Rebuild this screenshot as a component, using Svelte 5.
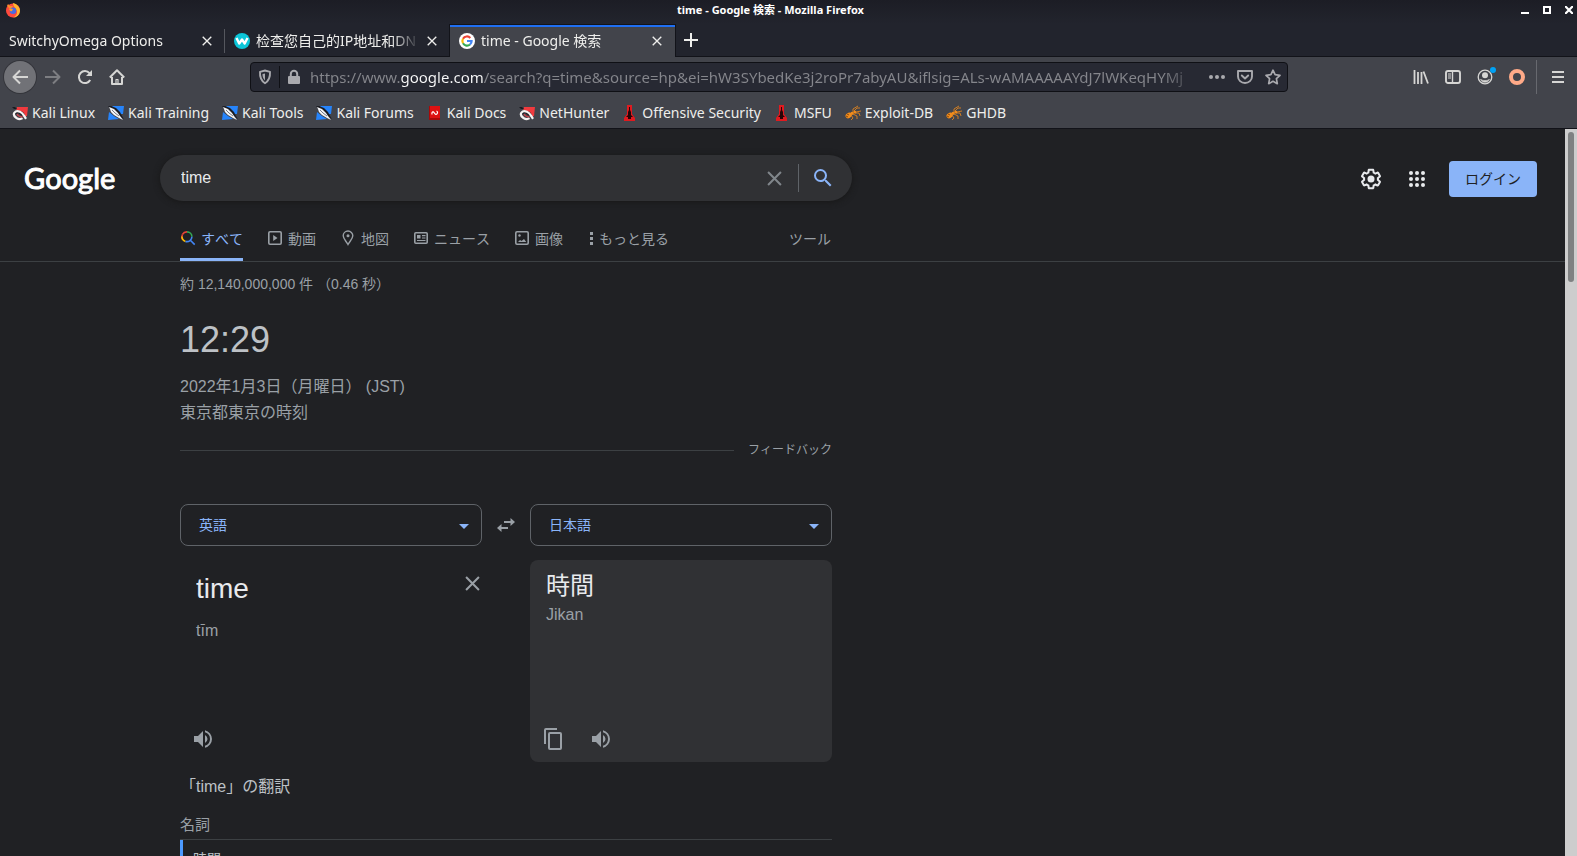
<script>
  let query = 'time';
  let sourceText = 'time';
  let url = 'https://www.google.com/search?q=time&source=hp&ei=hW3SYbedKe3j2roPr7abyAU&iflsig=ALs-wAMAAAAAYdJ7lWKeqHYMj';
  let sourceLang = '英語';
  let targetLang = '日本語';
  let activeTab = 2;

  const tabs = [
    { title: 'SwitchyOmega Options', icon: '' },
    { title: '检查您自己的IP地址和DN', icon: 'w' },
    { title: 'time - Google 検索', icon: 'g' },
  ];

  const bookmarks = [
    { title: 'Kali Linux', icon: 'kali' },
    { title: 'Kali Training', icon: 'blue' },
    { title: 'Kali Tools', icon: 'blue' },
    { title: 'Kali Forums', icon: 'blue' },
    { title: 'Kali Docs', icon: 'docs' },
    { title: 'NetHunter', icon: 'kali' },
    { title: 'Offensive Security', icon: 'offsec' },
    { title: 'MSFU', icon: 'offsec' },
    { title: 'Exploit-DB', icon: 'ant' },
    { title: 'GHDB', icon: 'ant' },
  ];

  const filters = [
    { title: 'すべて', icon: 'all' },
    { title: '動画', icon: 'video' },
    { title: '地図', icon: 'map' },
    { title: 'ニュース', icon: 'news' },
    { title: '画像', icon: 'image' },
  ];
</script>

{#snippet cross(size)}
  <svg width={size} height={size} viewBox="0 0 14 14" fill="none" stroke="currentColor" stroke-width="1.9">
    <path d="M1 1l12 12M13 1L1 13" />
  </svg>
{/snippet}

{#snippet volume()}
  <svg width="24" height="24" viewBox="0 0 24 24" fill="currentColor">
    <path d="M3 9v6h4l5 5V4L7 9H3zm13.5 3A4.5 4.5 0 0 0 14 7.97v8.05A4.5 4.5 0 0 0 16.5 12zM14 3.23v2.06a7 7 0 0 1 0 13.42v2.06a9 9 0 0 0 0-17.54z" />
  </svg>
{/snippet}

{#snippet bookmarkIcon(kind)}
  <svg width="16" height="16" viewBox="0 0 16 16">
    {#if kind === 'kali'}
      <path d="M5 2h11l-1 9-3 1-8-6z" fill="#f03a3e" />
      <path d="M0 2h3l2 2H2zM2 6l3-1 6 2 2 3-3 1-4-3-4 2z" fill="#1a1b20" />
      <path d="M10.500 13.200c-1.500 1-4 1-6-.2C2.300 11.500 1.300 9.500 2.300 7.800 3.500 6 6 6 8 6.800c2.500 1 3.500 3 4.500 4.600l1.500 2.400" fill="none" stroke="#f6f4f4" stroke-width="2.200" />
      <path d="M5 9c1 2 2.500 3 5.500 2.800" fill="none" stroke="#c9434a" stroke-width="1.200" />
    {:else if kind === 'blue'}
      <path d="M4 1h12l-1 8-4 0-5-5zM1 7l5 4 5 3-11 1z" fill="#2684fb" />
      <path d="M0 1h3l5 2 4 4 2 4 2 3-3-2-4-3-5-4z" fill="#1b1c22" />
      <path d="M1 2l5 2 4 4 2 3 3 4-4-2-5-3-3-3-1-3z" fill="#f2f4f7" />
      <path d="M4 5l3 3 4 3" fill="none" stroke="#777c86" stroke-width="1" />
    {:else if kind === 'docs'}
      <path d="M2 1h11v14H2z" fill="#dd1111" />
      <path d="M2 1h1v14H2zM2 13h11v2H2z" fill="#a90808" />
      <path d="M5 9.500C4.500 7 6 6 7 7.500s2 2.500 3 1.300.5-2.300-.5-2.800" fill="none" stroke="#fff" stroke-width="1.200" />
    {:else if kind === 'offsec'}
      <path d="M5 0h5v9l3 4v3H2v-3l3-4z" fill="#e01a1f" />
      <path d="M7 2h1v3l1 2v3l2 2H9v2H6v-2H4l2-2V7l1-2z" fill="#260608" />
    {:else}
      <g fill="#f28c1b" stroke="#f28c1b">
        <ellipse cx="3.600" cy="10.500" rx="3.200" ry="2.600" transform="rotate(-30 3.600 10.500)" stroke="none" />
        <circle cx="7" cy="8.300" r="1.600" stroke="none" />
        <circle cx="9.800" cy="7.200" r="1.400" stroke="none" />
        <path d="M8 7V4l5-3M9 6l3-3 3 0M11 7l5-1M10 8l4 0 1 3M8 9l4 2v3M6 10l2 3-2 2" fill="none" stroke-width=".8" />
      </g>
      <path d="M2 9l2 1m-3 1l2 1" stroke="#8b4a0b" stroke-width="1" />
    {/if}
  </svg>
{/snippet}

<div class="window">
  <!-- Window title bar -->
  <div class="titlebar">
    <svg class="fox" width="16" height="16" viewBox="0 0 16 16">
      <circle cx="8" cy="8.500" r="7" fill="#ff4a3d" />
      <path d="M8 1c4 1 7 4 7 8a7 7 0 0 1-7 6.500c3-1 4.500-3.500 4-6C11.500 6 8 5 8 1z" fill="#ffb52e" />
      <path d="M2 4l1-2 2 2h3L6 8z" fill="#ff8b2b" />
      <circle cx="8" cy="8.800" r="3.300" fill="#4a6be0" />
      <path d="M4 7c2-1 3 0 4 0l-1 2c-1 .5-2 .5-3-2z" fill="#ff9b2b" />
    </svg>
    <div class="window-title">time - Google 検索 - Mozilla Firefox</div>
    <div class="window-buttons">
      <button aria-label="Minimize"><svg width="8" height="8"><path d="M0 6h8v2H0z" fill="#fff" /></svg></button>
      <button aria-label="Maximize"><svg width="8" height="8"><path d="M1 1h6v6H1z" fill="none" stroke="#fff" stroke-width="2" /></svg></button>
      <button aria-label="Close"><svg width="8" height="8"><path d="M0 0l8 8M8 0L0 8" stroke="#fff" stroke-width="2.200" /></svg></button>
    </div>
  </div>

  <!-- Tab strip -->
  <div class="tabstrip">
    {#each tabs as tab, i}
      <div class="tab" class:active={i === activeTab}>
        <button class="tab-select" on:click={() => (activeTab = i)}>
          {#if tab.icon === 'w'}
            <svg width="16" height="16" viewBox="0 0 16 16">
              <circle cx="8" cy="8" r="8" fill="#0bc5d8" />
              <path d="M2.500 5l2.700 5.500L8 6.500l2.700 4L13.500 5" fill="none" stroke="#fff" stroke-width="2.400" stroke-linejoin="round" />
            </svg>
          {:else if tab.icon === 'g'}
            <svg width="16" height="16" viewBox="0 0 16 16">
              <circle cx="8" cy="8" r="8" fill="#fff" />
              <g fill="none" stroke-width="2.200">
                <path d="M11.300 4.900A4.600 4.600 0 0 0 4 5.700" stroke="#ea4335" />
                <path d="M4 5.700a4.600 4.600 0 0 0 0 4.600" stroke="#fbbc05" />
                <path d="M4 10.300a4.600 4.600 0 0 0 7 1.200" stroke="#34a853" />
                <path d="M11 11.500A4.600 4.600 0 0 0 12.600 8H8" stroke="#4285f4" />
              </g>
            </svg>
          {/if}
          <span class="tab-title">{tab.title}</span>
        </button>
        <button class="tab-close" aria-label="Close tab">{@render cross(10)}</button>
      </div>
    {/each}
    <button class="new-tab" aria-label="New tab">
      <svg width="14" height="14"><path d="M7 0v14M0 7h14" stroke="currentColor" stroke-width="2" /></svg>
    </button>
  </div>

  <!-- Navigation toolbar -->
  <div class="toolbar">
    <button class="tool back" aria-label="Back">
      <svg width="16" height="16" viewBox="0 0 16 16" fill="none" stroke="currentColor" stroke-width="2"><path d="M16 8H1.500M8 1.500L1.500 8 8 14.500" stroke-linejoin="round" /></svg>
    </button>
    <button class="tool dim" aria-label="Forward">
      <svg width="16" height="16" viewBox="0 0 16 16" fill="none" stroke="currentColor" stroke-width="2"><path d="M0 8h14.500M8 1.500L14.500 8 8 14.500" stroke-linejoin="round" /></svg>
    </button>
    <button class="tool" aria-label="Reload">
      <svg width="16" height="16" viewBox="0 0 16 16" fill="none" stroke="currentColor" stroke-width="2"><path d="M13.200 11A6 6 0 1 1 12.500 4.200" /><path d="M15 1v6H9z" fill="currentColor" stroke="none" /></svg>
    </button>
    <button class="tool" aria-label="Home">
      <svg width="16" height="16" viewBox="0 0 16 16" fill="none" stroke="currentColor" stroke-width="2" stroke-linejoin="round"><path d="M.8 8.500L8 1.300l7.200 7.200M3 8v7h10V8" /><path d="M7 10.500h2V15H7z" stroke-width="1.200" /></svg>
    </button>

    <div class="urlbar">
      <button class="url-icon" aria-label="Tracking protection">
        <svg width="16" height="16" viewBox="0 0 16 16"><path d="M8 1.500l5 1.300c.3 5.200-1 9-5 11.400C4 11.800 2.700 8 3 2.800z" fill="none" stroke="currentColor" stroke-width="1.900" stroke-linejoin="round" /><path d="M8 4.500v7C6 9.500 5.400 7.500 5.500 5z" fill="currentColor" /></svg>
      </button>
      <span class="url-divider"></span>
      <button class="url-icon" aria-label="Site information">
        <svg width="16" height="16" viewBox="0 0 16 16"><path d="M4.800 8V5a3.200 3.200 0 0 1 6.400 0v3" fill="none" stroke="currentColor" stroke-width="2" /><rect x="2" y="7" width="12" height="8" rx="1" fill="currentColor" /></svg>
      </button>
      <input type="text" class="url-input" aria-label="Address" bind:value={url} />
      <button class="url-icon" aria-label="Page actions">
        <svg width="16" height="16" viewBox="0 0 16 16" fill="currentColor"><circle cx="2" cy="8" r="2" /><circle cx="8" cy="8" r="2" /><circle cx="14" cy="8" r="2" /></svg>
      </button>
      <button class="url-icon" aria-label="Save to Pocket">
        <svg width="16" height="16" viewBox="0 0 16 16" fill="none" stroke="currentColor" stroke-width="1.900" stroke-linecap="round" stroke-linejoin="round"><path d="M1 2h14v5.500a7 6.500 0 0 1-14 0z" /><path d="M4.800 6.500L8 9.500l3.200-3" /></svg>
      </button>
      <button class="url-icon" aria-label="Bookmark this page">
        <svg width="16" height="16" viewBox="0 0 16 16" fill="none" stroke="currentColor" stroke-width="1.700" stroke-linejoin="round"><path d="M8 1.200l2.100 4.500 4.900.6-3.600 3.400.9 5L8 12.300l-4.300 2.400.9-5L1 6.300l4.900-.6z" /></svg>
      </button>
    </div>

    <button class="tool" aria-label="Library">
      <svg width="16" height="16" viewBox="0 0 16 16" stroke="currentColor" stroke-width="1.800"><path d="M1.500 1v14M5 3v12M8.500 3v12M10.500 2.500L15 14.500" /></svg>
    </button>
    <button class="tool" aria-label="Sidebars">
      <svg width="16" height="16" viewBox="0 0 16 16" fill="none" stroke="currentColor"><rect x="1" y="2" width="14" height="12" rx="2" stroke-width="1.900" /><path d="M7.500 2v12" stroke-width="1.400" /><path d="M3 5h3M3 7h3M3 9h3" stroke-width="1" /></svg>
    </button>
    <button class="tool" aria-label="Account">
      <svg width="16" height="16" viewBox="0 0 16 16"><circle cx="8" cy="8" r="6.800" fill="none" stroke="currentColor" stroke-width="1.300" /><circle cx="8" cy="6.200" r="3" fill="currentColor" /><path d="M3.500 10c1 2 8 2 9 0-.5 2-2.500 3.300-4.500 3.300S4 12 3.500 10z" fill="currentColor" stroke="currentColor" stroke-width=".6" /></svg>
      <span class="badge"></span>
    </button>
    <button class="tool" aria-label="SwitchyOmega">
      <svg width="16" height="16" viewBox="0 0 16 16"><circle cx="8" cy="8" r="6" fill="none" stroke="#fa8" stroke-width="4" /></svg>
    </button>
    <span class="tool-divider"></span>
    <button class="tool" aria-label="Open menu">
      <svg width="12" height="12"><path d="M0 1h12M0 6h12M0 11h12" stroke="currentColor" stroke-width="2" /></svg>
    </button>
  </div>

  <!-- Bookmarks bar -->
  <nav class="bookmarks" aria-label="Bookmarks">
    {#each bookmarks as bookmark}
      <a href="#{bookmark.title}">{@render bookmarkIcon(bookmark.icon)}{bookmark.title}</a>
    {/each}
  </nav>

  <div class="viewport">
    <div class="page">
      <header class="search-header">
        <a class="logo" href="#home">Google</a>
        <form class="searchbox" on:submit|preventDefault>
          <input type="text" aria-label="検索" bind:value={query} />
          <button type="button" class="clear" aria-label="クリア" on:click={() => (query = '')}>{@render cross(15)}</button>
          <span class="search-divider"></span>
          <button class="search-button" aria-label="検索">
            <svg width="24" height="24" viewBox="0 0 24 24" fill="#8ab4f8"><path d="M15.500 14h-.79l-.28-.27A6.470 6.470 0 0 0 16 9.500 6.500 6.500 0 1 0 9.500 16c1.610 0 3.090-.59 4.230-1.570l.27.28v.79l5 4.990L20.490 19l-4.990-5zm-6 0a4.500 4.500 0 1 1 0-9 4.500 4.500 0 0 1 0 9z" /></svg>
          </button>
        </form>
        <div class="account">
          <button class="round" aria-label="設定">
            <svg width="24" height="24" viewBox="0 0 24 24"><path d="M13.850 22.250h-3.700c-.74 0-1.360-.54-1.450-1.270l-.27-1.890c-.27-.14-.53-.29-.79-.46l-1.800.72c-.7.26-1.470-.03-1.810-.65L2.200 15.530c-.35-.66-.2-1.440.36-1.880l1.530-1.190a7 7 0 0 1 0-.92L2.570 10.350c-.58-.46-.74-1.260-.37-1.880l1.840-3.190c.34-.62 1.110-.9 1.790-.63l1.810.73c.26-.17.520-.32.780-.46l.27-1.910c.09-.7.710-1.250 1.440-1.250h3.700c.74 0 1.360.54 1.450 1.270l.27 1.890c.27.14.53.29.790.460l1.800-.72c.71-.26 1.480.03 1.820.65l1.840 3.180c.36.66.2 1.440-.36 1.880l-1.520 1.190c.03.300.03.620 0 .92l1.520 1.190c.56.45.72 1.230.37 1.860l-1.860 3.220c-.34.62-1.110.9-1.800.63l-1.800-.72c-.26.17-.52.32-.78.46l-.27 1.910c-.1.680-.72 1.220-1.460 1.220zm-3.230-2h2.760l.37-2.550.53-.22c.44-.18.88-.44 1.340-.78l.45-.34 2.380.96 1.380-2.400-2.030-1.580.07-.56c.06-.52.06-1.040 0-1.560l-.07-.56 2.030-1.580-1.390-2.400-2.390.96-.45-.35a6 6 0 0 0-1.320-.77l-.52-.22-.37-2.550h-2.760l-.37 2.550-.53.210c-.44.190-.88.440-1.340.790l-.45.330-2.380-.95-1.390 2.390 2.030 1.580-.07.560a7 7 0 0 0 0 1.570l.07.560-2.030 1.580 1.380 2.400 2.390-.96.450.35c.43.330.860.580 1.330.770l.53.220z" fill="#e8eaed" /><circle cx="12" cy="12" r="3.500" fill="#e8eaed" /></svg>
          </button>
          <button class="round" aria-label="Google アプリ">
            <svg width="16" height="16" viewBox="0 0 16 16" fill="#e8eaed">
              {#each [2, 8, 14] as y}
                {#each [2, 8, 14] as x}
                  <circle cx={x} cy={y} r="2" />
                {/each}
              {/each}
            </svg>
          </button>
          <a class="login" href="#login">ログイン</a>
        </div>
      </header>

      <nav class="filters" aria-label="検索の種類">
        {#each filters as filter, i}
          <a class="filter" class:selected={i === 0} href="#{filter.icon}">
            <svg width="16" height="16" viewBox="0 0 16 16" fill="none" stroke="currentColor" stroke-width="1.600">
              {#if filter.icon === 'all'}
                <path d="M2.500 4.300A5 5 0 0 1 7 1.900" stroke="#ea4335" /><path d="M2.500 4.300a5 5 0 0 0 0 5" stroke="#ea4335" />
                <path d="M2 6.500a5 5 0 0 0 3.500 4.900" stroke="#fbbc05" /><path d="M7 1.900a4.900 4.900 0 0 1 4.900 4.900" stroke="#34a853" />
                <path d="M5.500 11.400c3.500.9 6.400-1.700 6.400-4.600M10.400 10.300l4.300 4.300" stroke="#4285f4" />
              {:else if filter.icon === 'video'}
                <rect x="1.800" y="1.800" width="12.400" height="12.400" rx="1.200" /><path d="M6.200 5v6l4.300-3z" fill="currentColor" stroke="none" />
              {:else if filter.icon === 'map'}
                <path d="M8 14.500C6 11 3.200 8.500 3.200 5.800a4.800 4.800 0 0 1 9.600 0C12.800 8.500 10 11 8 14.500z" stroke-width="1.400" /><circle cx="8" cy="5.800" r="1.500" fill="currentColor" stroke="none" />
              {:else if filter.icon === 'news'}
                <rect x="1.800" y="2.800" width="12.400" height="10.400" rx="1" /><path d="M4 5h3.500v3.500H4z" fill="currentColor" stroke="none" /><path d="M9 5.600h3.500M9 8h3.500M4 10.500h8.500" stroke-width="1.200" />
              {:else}
                <rect x="1.800" y="1.800" width="12.400" height="12.400" rx="1.200" /><path d="M4 12l2-2 1.600 1L10 9l2.200 3z" fill="currentColor" stroke="none" /><circle cx="5.500" cy="5.500" r="1.200" fill="currentColor" stroke="none" />
              {/if}
            </svg>
            {filter.title}
          </a>
        {/each}
        <button class="filter more">
          <svg width="7" height="16" viewBox="0 0 7 16" fill="currentColor"><path d="M3 2h3v3H3zM3 7h3v3H3zM3 12h3v3H3z" /></svg>
          もっと見る
        </button>
        <button class="filter tools">ツール</button>
      </nav>

      <main class="results">
        <p class="stats">約 12,140,000,000 件 （0.46 秒）</p>

        <section>
          <div class="clock">12:29</div>
          <div class="date">2022年1月3日（月曜日） (JST)</div>
          <div class="date">東京都東京の時刻</div>
          <div class="feedback"><a href="#feedback">フィードバック</a></div>
        </section>

        <section class="translate">
          <div class="select-wrap">
            <select aria-label="翻訳元の言語" bind:value={sourceLang}>
              <option>英語</option>
              <option>日本語</option>
            </select>
          </div>
          <button class="icon-button swap" aria-label="言語を入れ替え">
            <svg width="20" height="16" viewBox="0 0 20 16" fill="currentColor"><path d="M14.500 1v3H8v2h6.500v3L19 5zM5.500 7v3H12v2H5.500v3L1 11z" /></svg>
          </button>
          <div class="select-wrap">
            <select aria-label="翻訳先の言語" bind:value={targetLang}>
              <option>日本語</option>
              <option>英語</option>
            </select>
          </div>

          <div class="panel">
            <div class="source-row">
              <input type="text" aria-label="翻訳するテキスト" bind:value={sourceText} />
              <button class="icon-button" aria-label="消去" on:click={() => (sourceText = '')}>{@render cross(15)}</button>
            </div>
            <div class="reading">tīm</div>
            <div class="actions">
              <button class="icon-button" aria-label="聞く">{@render volume()}</button>
            </div>
          </div>
          <div class="panel target">
            <div class="target-text">時間</div>
            <div class="reading">Jikan</div>
            <div class="actions">
              <button class="icon-button" aria-label="コピー">
                <svg width="24" height="24" viewBox="0 0 24 24" fill="currentColor"><path d="M16 1H5a2 2 0 0 0-2 2v14h2V3h11V1zm3 4H9a2 2 0 0 0-2 2v14a2 2 0 0 0 2 2h10a2 2 0 0 0 2-2V7a2 2 0 0 0-2-2zm0 16H9V7h10v14z" /></svg>
              </button>
              <button class="icon-button" aria-label="聞く">{@render volume()}</button>
            </div>
          </div>
        </section>

        <h2>「time」の翻訳</h2>
        <h3>名詞</h3>
        <div class="entry">時間</div>
      </main>
    </div>
    <div class="scrollbar"><div class="thumb"></div></div>
  </div>
</div>

<style>
  :global(body) {
    background: #202124;
    overflow: hidden;
  }

  .window {
    height: 100vh;
    display: flex;
    flex-direction: column;
    font-family: 'Noto Sans', 'Noto Sans CJK SC', sans-serif;
    font-size: 14px;
    color: #eeeeec;
  }

  svg {
    display: block;
    flex-shrink: 0;
  }

  button {
    padding: 0;
    border: 0;
    background: none;
    color: inherit;
    font: inherit;
    display: flex;
    align-items: center;
    justify-content: center;
    flex-shrink: 0;
    cursor: pointer;
  }

  input {
    min-width: 0;
    padding: 0;
    border: 0;
    background: none;
    color: inherit;
    font: inherit;
    outline: none;
  }

  a {
    color: inherit;
    text-decoration: none;
  }

  .titlebar {
    height: 24px;
    flex-shrink: 0;
    display: flex;
    align-items: flex-start;
    background: linear-gradient(#1c1d25, #22242d);
    color: #fff;
  }

  .fox {
    margin: 2px 3px 0 5px;
  }

  .window-title {
    flex: 1;
    text-align: center;
    font-size: 11px;
    font-weight: bold;
    line-height: 20px;
  }

  .window-buttons {
    display: flex;
    gap: 14px;
    padding: 6px 4px 0 0;
    width: 56px;
    justify-content: flex-end;
  }

  .tabstrip {
    height: 32px;
    flex-shrink: 0;
    display: flex;
    background: #22242d;
    border-bottom: 1px solid #121319;
  }

  .tab {
    position: relative;
    box-sizing: border-box;
    width: 225px;
    height: 33px;
    padding: 0 8px 0 9px;
    display: flex;
    align-items: center;
    gap: 2px;
  }

  .tab:first-child::after {
    content: '';
    position: absolute;
    right: 0;
    top: 5px;
    width: 1px;
    height: 24px;
    background: #55575e;
  }

  .tab.active {
    background: #42444b;
    box-shadow: inset 0 1px #121319, inset 0 3px #1f6ff2, 1px 0 #121319, -1px 0 #121319;
  }

  .tab-select {
    flex: 1;
    min-width: 0;
    gap: 6px;
    justify-content: flex-start;
  }

  .tab-title {
    flex: 1;
    overflow: hidden;
    white-space: nowrap;
    text-align: left;
    line-height: 24px;
    mask-image: linear-gradient(to left, transparent, #000 28px);
  }

  .tab-close {
    width: 20px;
    height: 20px;
  }

  .new-tab {
    width: 32px;
    height: 32px;
  }

  .toolbar {
    height: 40px;
    flex-shrink: 0;
    display: flex;
    align-items: center;
    padding: 0 3px 0 4px;
    background: #42444b;
    color: #d6d6d4;
  }

  .tool {
    position: relative;
    width: 32px;
    height: 32px;
  }

  .tool.back {
    box-sizing: border-box;
    margin-right: 1px;
    border-radius: 50%;
    background: #717277;
    box-shadow: 0 0 0 1px #34353b;
  }

  .tool.dim {
    color: #7d7e82;
  }

  .badge {
    position: absolute;
    right: 5px;
    top: 6px;
    width: 6px;
    height: 6px;
    border-radius: 50%;
    background: #00a2f5;
  }

  .tool-divider {
    width: 1px;
    height: 34px;
    margin: 0 5px 0 3px;
    background: #67696f;
  }

  .urlbar {
    flex: 1;
    min-width: 0;
    box-sizing: border-box;
    height: 30px;
    margin: 0 117px;
    display: flex;
    align-items: center;
    background: #272933;
    border: 1px solid #0f1015;
    border-radius: 4px;
    color: #a9a9ae;
  }

  .url-icon {
    width: 28px;
    height: 28px;
  }

  .url-divider {
    width: 1px;
    height: 22px;
    background: #0f1015;
  }

  .url-input {
    flex: 1;
    height: 24px;
    margin: 0 4px 0 2px;
    font-size: 15px;
    background: linear-gradient(to right, #85868c 91px, #f9f9fa 91px, #f9f9fa 173px, #85868c 173px, #85868c calc(100% - 36px), transparent);
    background-clip: text;
    -webkit-background-clip: text;
    -webkit-text-fill-color: transparent;
  }

  .bookmarks {
    height: 31px;
    flex-shrink: 0;
    display: flex;
    align-items: center;
    gap: 13px;
    padding-left: 12px;
    background: #42444b;
    border-bottom: 1px solid #121319;
    white-space: nowrap;
  }

  .bookmarks a {
    display: flex;
    align-items: center;
    gap: 4px;
  }

  .viewport {
    flex: 1;
    min-height: 0;
    display: flex;
    background: #202124;
    font-family: 'Liberation Sans', 'Noto Sans CJK JP', sans-serif;
    font-kerning: none;
  }

  .page {
    flex: 1;
    min-width: 0;
    overflow: hidden;
  }

  .scrollbar {
    width: 12px;
    box-sizing: border-box;
    padding: 3px;
    background: #cdcdcd;
  }

  .thumb {
    height: 150px;
    border-radius: 3px;
    background: #7f8182;
  }

  .search-header {
    display: flex;
    align-items: center;
    padding: 26px 28px 0 24px;
  }

  .logo {
    width: 136px;
    font-family: Lato, sans-serif;
    font-size: 29px;
    line-height: 40px;
    color: #fff;
    -webkit-text-stroke: 1px #fff;
  }

  .searchbox {
    box-sizing: border-box;
    width: 692px;
    height: 46px;
    padding: 0 17px 0 21px;
    display: flex;
    align-items: center;
    background: #303134;
    border-radius: 23px;
    box-shadow: 0 1px 6px #171717;
    color: #e8eaed;
  }

  .searchbox input {
    flex: 1;
    height: 34px;
    font-size: 16px;
  }

  .clear {
    width: 40px;
    height: 40px;
    color: #80868b;
  }

  .search-divider {
    width: 1px;
    height: 28px;
    margin: 0 12px 0 4px;
    background: #5f6368;
  }

  .account {
    margin-left: auto;
    display: flex;
    align-items: center;
    padding-top: 2px;
  }

  .round {
    width: 40px;
    height: 40px;
    margin-right: 6px;
  }

  .login {
    margin-left: 6px;
    padding: 0 16px;
    line-height: 36px;
    border-radius: 4px;
    background: #8ab4f8;
    color: #202124;
  }

  .filters {
    height: 60px;
    padding-left: 180px;
    display: flex;
    align-items: flex-end;
    gap: 24px;
    border-bottom: 1px solid #3c4043;
    color: #9aa0a6;
  }

  .filter {
    box-sizing: border-box;
    height: 45px;
    padding-top: 2px;
    border-bottom: 3px solid transparent;
    display: flex;
    align-items: center;
    gap: 5px;
  }

  .filter.selected {
    color: #8ab4f8;
    border-color: #8ab4f8;
  }

  .filter.tools {
    margin-left: 96px;
  }

  .results {
    width: 652px;
    margin-left: 180px;
    color: #9aa0a6;
  }

  .stats {
    margin: 12px 0 24px;
    line-height: 20px;
  }

  .clock {
    margin-bottom: 12px;
    font-size: 36px;
    line-height: 44px;
    color: #bdc1c6;
  }

  .date {
    font-size: 16px;
    line-height: 26px;
  }

  .feedback {
    margin: 16px 0 46px;
    display: flex;
    align-items: center;
    gap: 14px;
    font-size: 12px;
    line-height: 16px;
  }

  .feedback::before {
    content: '';
    flex: 1;
    height: 1px;
    background: #3c4043;
  }

  .translate {
    display: grid;
    grid-template-columns: minmax(0, 1fr) 48px minmax(0, 1fr);
    row-gap: 14px;
  }

  .select-wrap {
    position: relative;
  }

  .select-wrap::after {
    content: '';
    position: absolute;
    right: 13px;
    top: 20px;
    border: 5px solid transparent;
    border-top-color: #8ab4f8;
    border-bottom: 0;
    pointer-events: none;
  }

  select {
    appearance: none;
    width: 100%;
    height: 42px;
    padding: 0 18px;
    border: 1px solid #5f6368;
    border-radius: 8px;
    background: #202124;
    color: #8ab4f8;
    font: inherit;
  }

  .icon-button {
    color: #9aa0a6;
  }

  .panel {
    box-sizing: border-box;
    height: 202px;
    padding: 10px 0 11px 16px;
    display: flex;
    flex-direction: column;
    border-radius: 8px;
    font-size: 16px;
  }

  .panel.target {
    grid-column: 3;
    background: #303134;
  }

  .source-row {
    display: flex;
    align-items: flex-start;
    margin-bottom: 11px;
  }

  .source-row input {
    flex: 1;
    height: 38px;
    font-size: 28px;
    color: #e8eaed;
  }

  .source-row .icon-button {
    width: 19px;
    height: 26px;
  }

  .reading {
    line-height: 24px;
  }

  .target-text {
    margin-bottom: 1px;
    font-size: 24px;
    line-height: 32px;
    color: #e8eaed;
  }

  .actions {
    margin-top: auto;
    margin-left: -5px;
    display: flex;
    gap: 24px;
  }

  h2 {
    margin: 13px 0 16px;
    font-size: 16px;
    font-weight: normal;
    line-height: 24px;
    color: #bdc1c6;
  }

  h3 {
    margin: 0;
    padding-bottom: 4px;
    border-bottom: 1px solid #3c4043;
    font-size: 15px;
    font-weight: normal;
    line-height: 20px;
  }

  .entry {
    padding: 9px 0 9px 10px;
    border-left: 3px solid #4c9aff;
    line-height: 20px;
    color: #bdc1c6;
  }
</style>
